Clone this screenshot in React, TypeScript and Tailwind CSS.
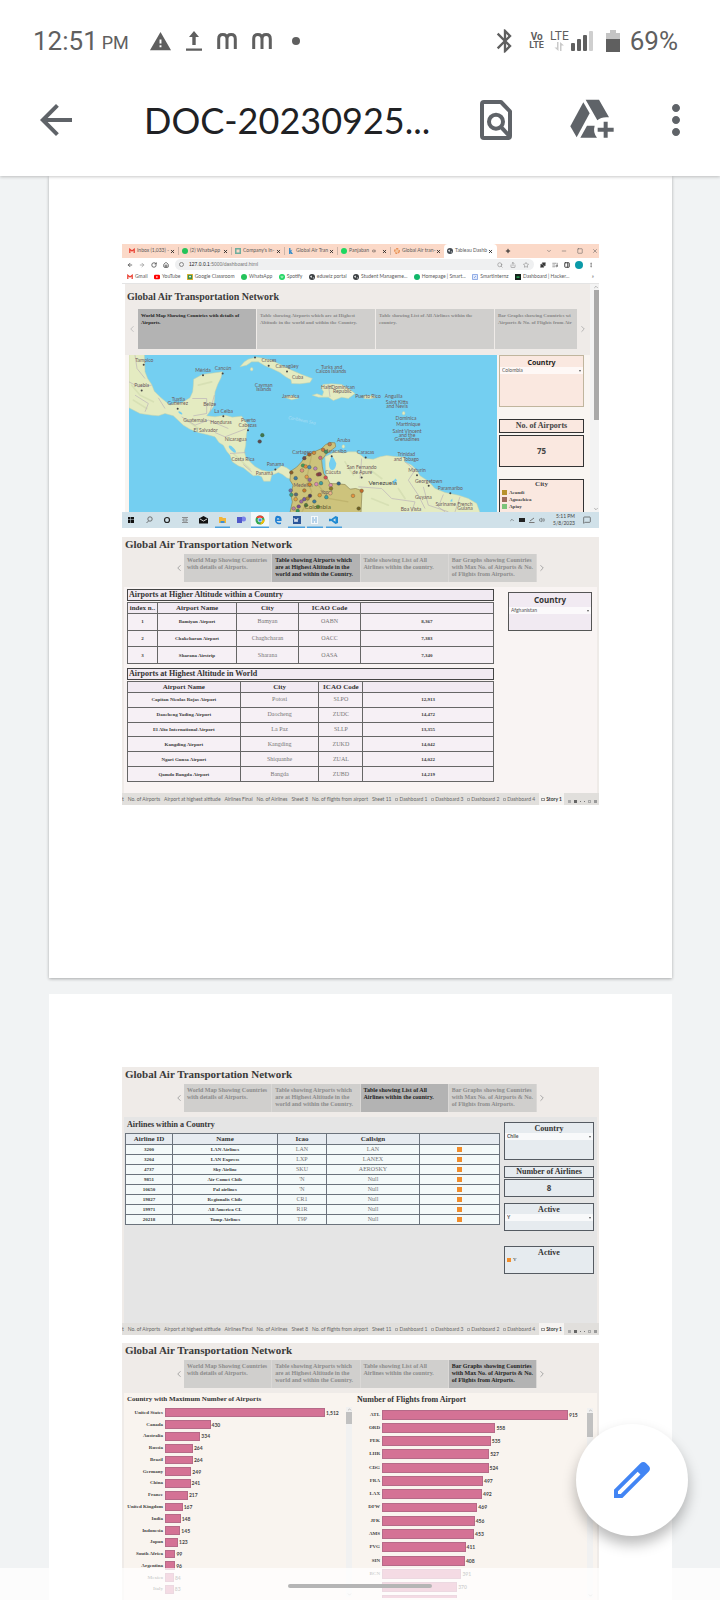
import type { ReactNode } from "react";
import { MdArrowBack, MdBluetooth, MdMoreVert, MdWarning } from "react-icons/md";
import {
  ArrowLeft,
  ArrowRight,
  ChevronDown,
  ChevronLeft,
  ChevronRight,
  ChevronUp,
  Home,
  ListMusic,
  MessageSquare,
  Minus,
  MoreVertical,
  PanelRight,
  Plus,
  Puzzle,
  RotateCw,
  Search,
  Share,
  Square,
  Star,
  Volume2,
  X,
} from "lucide-react";

const serif = "font-['Liberation_Serif',serif]";
const sans = "font-['Lato','Noto_Sans',sans-serif]";

/* ---------- Phone chrome ---------- */

function StatusBar() {
  return (
    <div className="flex h-[82px] items-center justify-between pl-[33px] pr-[42px] font-['Roboto',sans-serif] text-[#5f5f5f]">
      <div className="flex items-center">
        <span className="text-[26px] leading-8">12:51</span>
        <span className="ml-1 pt-1 text-[18px] leading-8">PM</span>
        <MdWarning className="ml-5 size-[23px]" />
        <svg viewBox="0 0 16 20" className="ml-[14px] h-5 w-4" fill="currentColor">
          <path d="M8 0 13 6H9.700V14H6.300V6H3zM0 17.500H16V19.800H0z" />
        </svg>
        {[0, 1].map((i) => (
          <svg key={i} viewBox="0 0 20 16" className="ml-[15px] h-4 w-5" fill="none" stroke="currentColor" strokeWidth="3">
            <path d="M1.700 16V6Q1.700 1.600 5.800 1.600 10 1.600 10 6V16M10 6Q10 1.600 14.200 1.600 18.300 1.600 18.300 6V16" />
          </svg>
        ))}
        <span className="ml-5 size-2 rounded-full bg-[#5f5f5f]" />
      </div>
      <div className="flex items-center">
        <MdBluetooth className="size-7" />
        <span className="ml-2.5 flex flex-col items-center text-[10px] font-bold leading-[9px]">
          <span>Vo</span>
          <span className="text-[9px]">LTE</span>
        </span>
        <span className="ml-1.5 flex flex-col items-center">
          <span className="text-[12px] leading-[11px]">LTE</span>
          <svg viewBox="0 0 10 9" className="h-[9px] w-[10px]" fill="#c9c9c9">
            <path d="M3 0H4.500V9L.5 5.500H3zM6 9H7.500V3.500H10L6 0z" />
          </svg>
        </span>
        <svg viewBox="0 0 22 20" className="ml-0.5 h-5 w-[22px]" fill="currentColor">
          <rect x="0" y="12" width="4" height="8" rx="1" />
          <rect x="6" y="8" width="4" height="12" rx="1" />
          <rect x="12" y="4" width="4" height="16" rx="1" />
          <rect x="18" y="0" width="4" height="20" rx="1" fill="#cfcfcf" />
        </svg>
        <svg viewBox="0 0 14 22" className="ml-[13px] h-[22px] w-[14px]">
          <path d="M4 0H10V3H14V9H0V3H4z" fill="#c4c4c4" />
          <path d="M0 9H14V22H0z" fill="#5f5f5f" />
        </svg>
        <span className="ml-2.5 text-[26px] leading-8">69%</span>
      </div>
    </div>
  );
}

function AppBar() {
  return (
    <div className="flex h-[94px] items-center pb-[18px] pl-8 pr-5 text-[#5f6368]">
      <button aria-label="Back" className="size-12">
        <MdArrowBack className="size-12" />
      </button>
      <h1 className="ml-16 flex-1 whitespace-nowrap font-['Lato',sans-serif] text-[36px] leading-[44px] text-[#202124]">
        DOC-20230925...
      </h1>
      <button aria-label="Find in page" className="size-12">
        <svg viewBox="6 228 144 144" className="size-12" fill="none" stroke="currentColor" strokeWidth="12">
          <path d="M42 246H93L120 274V348Q120 354 114 354H42Q36 354 36 348V252Q36 246 42 246z" strokeLinejoin="round" />
          <circle cx="78" cy="305" r="21" />
          <path d="M92 320 118 348" />
        </svg>
      </button>
      <button aria-label="Add to Drive" className="ml-12 size-12">
        <svg viewBox="295 229 144 144" className="size-12" fill="currentColor">
          <path d="M341 248 360 281 321 353 302 320z" />
          <path d="M348 240H388L418 293Q396 290 383 302z" />
          <path d="M352 318H375Q369 338 382 354H332z" />
          <path d="M402 306H414V324H432V336H414V354H402V336H384V324H402z" />
        </svg>
      </button>
      <button aria-label="More options" className="ml-9 size-12">
        <MdMoreVert className="size-12" />
      </button>
    </div>
  );
}

/* ---------- Story captions ---------- */

const captions = [
  "World Map Showing Countries with details of Airports.",
  "Table showing Airports which are at Highest Altitude in the world and within the Country.",
  "Table showing List of  All Airlines within the country.",
  "Bar Graphs showing Countries with Max No. of Airports & No. of Flights from Airports.",
];

const sheets = ["No. of Airports", "Airport at highest altitude", "Airlines Final", "No. of Airlines", "Sheet 8", "No. of flights from airport", "Sheet 11"];
const boards = ["Dashboard 1", "Dashboard 3", "Dashboard 2", "Dashboard 4"];

function Story({ active, body, tabs = true, children }: { active: number; body: string; tabs?: boolean; children: ReactNode }) {
  return (
    <section className="flex h-[268px] flex-col bg-[#efebe8]">
      <h2 className={`${serif} h-[17px] pl-[3px] pt-px text-[11px] font-bold leading-3 text-[#3a3a3a]`}>
        Global Air Transportation Network
      </h2>
      <div className="flex h-7 items-center">
        <button aria-label="Previous" className="flex w-[62px] justify-end text-[#999]">
          <ChevronLeft className="size-2.5" />
        </button>
        <div className="grid h-full flex-1 grid-cols-4">
          {captions.map((c, i) => (
            <button
              key={c}
              className={`${serif} flex items-start border-r border-[#dad8d6] pl-[3px] pt-[3px] text-left text-[6px] font-bold leading-[7px] ${
                i === active ? "bg-[#b3b3b3] text-[#222]" : "bg-[#d0cfcd] text-[#8b8b8b]"
              }`}
            >
              {c}
            </button>
          ))}
        </div>
        <button aria-label="Next" className="w-[62px] text-[#999]">
          <ChevronRight className="size-2.5" />
        </button>
      </div>
      <div className={`ml-0.5 mr-0.5 mt-[5px] min-h-0 flex-1 overflow-hidden ${body}`}>{children}</div>
      {tabs && (
        <div className={`${sans} flex h-3 items-stretch justify-between overflow-hidden whitespace-nowrap bg-[#e1dfdc] text-[5px] leading-3 text-[#666]`}>
          <span>t</span>
          {sheets.map((s) => (
            <button key={s}>{s}</button>
          ))}
          {boards.map((s) => (
            <button key={s} className="flex items-center gap-px">
              <i className="size-[3px] border border-[#aaa]" />
              {s}
            </button>
          ))}
          <button className="flex items-center gap-px bg-[#f5f3f1] px-0.5 font-bold text-[#333]">
            <i className="h-[3px] w-1 border border-[#999]" />
            Story 1
          </button>
          <span className="flex items-center gap-[3px] pr-0.5 pt-1">
            <i className="size-[3px] bg-[#aaa]" />
            <i className="size-[3px] bg-[#666]" />
            <i className="size-px bg-[#777]" />
            <i className="size-px bg-[#777]" />
            <i className="size-[3px] border border-[#aaa]" />
            <i className="size-[3px] bg-[#999]" />
          </span>
        </div>
      )}
    </section>
  );
}

function Drop({ label, value }: { label: string; value: string }) {
  return (
    <div className="flex h-[7px] items-center bg-white/70 pr-0.5">
      <select
        aria-label={label}
        className={`${sans} h-[7px] min-w-0 flex-1 appearance-none pl-0.5 text-[5px] leading-[7px] text-[#555]`}
      >
        <option>{value}</option>
      </select>
      <span className="border-x-[1px] border-t-[2px] border-x-transparent border-t-[#555]" />
    </div>
  );
}

/* ---------- Browser window with the map ---------- */

const browserTabs: [string, ReactNode][] = [
  ["Inbox (1,033) -", <path d="M.8 5V1.300L3 3 5.200 1.300V5" fill="none" stroke="#ea4335" strokeWidth="1.300" />],
  ["(2) WhatsApp", <circle cx="3" cy="3" r="3" fill="#25c35a" />],
  ["Company's In-", <path d="M0 0H6V6H0zM1.500 1.500V4.500H4.500V1.500z" fill="#6fae9e" fillRule="evenodd" />],
  ["Global Air Tran", <path d="M1 0H2.500V2.500L4.500 1.500 3.200 3.200 5 6H3L2.500 4.500V6H1z" fill="#3b8fc9" />],
  ["Panjaban", <circle cx="3" cy="3" r="3" fill="#1ed760" />],
  ["Global Air tran-", <circle cx="3" cy="3" r="2.300" fill="#f6c79f" stroke="#e8894d" strokeWidth="1.200" strokeDasharray="2 1" />],
  ["Tableau Dashb", <g><circle cx="3" cy="3" r="3" fill="#444b52" /><path d="M1 2.500 3 1.500 2.500 4zM3.800 3.500H5L4 5z" fill="#fff" /></g>],
];

const globe = <g><circle cx="3" cy="3" r="3" fill="#3c4043" /><path d="M1 2.500 3 1.500 2.500 4zM3.800 3.500H5L4 5z" fill="#fff" /></g>;

const bookmarks: [string, ReactNode][] = [
  ["Gmail", <path d="M.8 5V1.300L3 3 5.200 1.300V5" fill="none" stroke="#ea4335" strokeWidth="1.300" />],
  ["YouTube", <g><rect y=".8" width="6" height="4.400" rx="1.200" fill="#f00" /><path d="M2.300 2V4L4.200 3z" fill="#fff" /></g>],
  ["Google Classroom", <g><rect width="6" height="6" fill="#f2b632" /><rect x=".8" y=".8" width="4.400" height="4.400" fill="#3a8f4c" /><circle cx="3" cy="2.600" r=".9" fill="#fff" /></g>],
  ["WhatsApp", <circle cx="3" cy="3" r="3" fill="#25c35a" />],
  ["Spotify", <g><circle cx="3" cy="3" r="3" fill="#1ed760" /><path d="M1.500 2.300H4.500M1.800 3.700H4.200" stroke="#fff" strokeWidth=".6" /></g>],
  ["eduwiz portal", globe],
  ["Student Manageme...", globe],
  ["Homepage | Smart...", <circle cx="3" cy="3" r="3" fill="#12b76a" />],
  ["SmartInternz", <path d="M.5 .5H5.500V5.500H.5zM2 4 4 2" fill="#dfe8fb" stroke="#7c9ce0" strokeWidth=".8" />],
  ["Dashboard | Hacker...", <g><rect width="6" height="6" fill="#14221a" /><rect x="1.500" y="2.500" width="3" height="1.200" fill="#2ec866" /></g>],
];

function Favicon({ children, className = "" }: { children: ReactNode; className?: string }) {
  return (
    <svg viewBox="0 0 6 6" className={`size-[6px] shrink-0 ${className}`}>
      {children}
    </svg>
  );
}

function BrowserBars() {
  return (
    <div className={`${sans} text-[5px] text-[#5a5a5a]`}>
      <div className="flex h-[14px] items-stretch bg-[#fbd9c8] pl-1">
        {browserTabs.map(([name, icon], i) => (
          <button
            key={name}
            className={`flex w-[53px] items-center whitespace-nowrap pl-[3px] ${i === 6 ? "rounded-t bg-white" : ""}`}
          >
            <Favicon className="mr-0.5">{icon}</Favicon>
            <span className="flex-1 text-left">{name}</span>
            {i === 4 && <Volume2 className="mr-1.5 size-1 shrink-0 text-[#222]" />}
            <X className="size-[5px] shrink-0 text-[#222]" strokeWidth={4} />
            <span className={`ml-[3px] h-2 w-px ${i === 6 ? "" : "bg-[#cdb5a8]"}`} />
          </button>
        ))}
        <div className="flex flex-1 items-center justify-between pl-2 pr-px text-[#555]">
          <Plus className="size-[6px] text-[#222]" strokeWidth={4} />
          <span className="w-4" />
          <ChevronDown className="size-[6px]" />
          <Minus className="size-[6px]" />
          <Square className="size-[6px]" />
          <X className="size-[6px]" />
        </div>
      </div>
      <div className="flex h-[13px] items-center bg-white pl-[5px] pr-[5px] text-[#444]">
        <ArrowLeft className="mr-[6px] size-[6px]" strokeWidth={3} />
        <ArrowRight className="mr-[6px] size-[6px] text-[#999]" strokeWidth={3} />
        <RotateCw className="mr-[6px] size-[6px]" strokeWidth={3} />
        <Home className="mr-[6px] size-[6px]" strokeWidth={3} />
        <div className="flex h-[11px] flex-1 items-center gap-[5px] rounded-full bg-[#eff0f1] px-1">
          <span className="size-[5px] rounded-full border border-[#888]" />
          <span className="flex-1 font-['Liberation_Sans',sans-serif] text-[#777]">
            <span className="text-[#222]">127.0.0.1</span>:5000/dashboard.html
          </span>
          <Search className="mr-px size-[6px] text-[#777]" />
          <Share className="mx-px size-[6px] text-[#777]" />
          <Star className="mx-px size-[6px] text-[#777]" />
        </div>
        <Puzzle className="ml-[6px] size-[6px] fill-[#333]" />
        <ListMusic className="ml-[6px] size-[6px]" />
        <PanelRight className="ml-[6px] size-[6px]" strokeWidth={4} />
        <span className="ml-[5px] size-2 rounded-full bg-[#0b9aa8]" />
        <MoreVertical className="ml-[5px] size-[6px]" />
      </div>
      <div className="flex h-[13px] items-center justify-between border-b border-[#e4e4e4] bg-white pl-[5px] pr-[5px]">
        {bookmarks.map(([name, icon]) => (
          <a key={name} href="#" className="flex items-center gap-0.5 whitespace-nowrap">
            <Favicon>{icon}</Favicon>
            {name}
          </a>
        ))}
        <span className="pl-4">»</span>
      </div>
    </div>
  );
}

const places: [string, number, number][] = [
  ["Tampico", 88, 50], ["Puebla", 80, 127], ["Mérida", 264, 80], ["Cancún", 324, 76], ["Cruces", 462, 52],
  ["Camagüey", 516, 70], ["Cuba", 548, 101], ["Tuxtla", 190, 167], ["Gutiérrez", 188, 181], ["Belize", 284, 184],
  ["La Ceiba", 326, 204], ["Guatemala", 240, 231], ["Honduras", 318, 237], ["El Salvador", 272, 261],
  ["Puerto", 400, 230], ["Cabezas", 398, 245], ["Nicaragua", 362, 288], ["Costa Rica", 384, 347],
  ["Panama", 481, 363], ["Panamá", 448, 389], ["Cayman", 446, 125], ["Islands", 446, 138], ["Jamaica", 527, 160],
  ["Haiti", 634, 132], ["Dominican", 684, 132], ["Republic", 682, 145], ["Turks and", 650, 72], ["Caicos Islands", 648, 85],
  ["Aruba", 686, 292], ["Cartagena", 565, 328], ["Maracaibo", 660, 324], ["San Fernando", 740, 372], ["de Apure", 742, 387],
  ["Puerto Rico", 759, 158], ["Anguilla", 836, 158], ["Saint Kitts", 846, 176], ["and Nevis", 846, 189],
  ["Dominica", 873, 224], ["Martinique", 880, 243], ["Saint Vincent", 876, 263], ["and the", 876, 276],
  ["Grenadines", 876, 288], ["Caracas", 752, 328], ["Trinidad", 874, 333], ["and Tobago", 874, 347],
  ["Maturín", 906, 381], ["Georgetown", 941, 413], ["Paramaribo", 1006, 435], ["Guyana", 925, 461],
  ["Suriname", 992, 482], ["French", 1050, 482], ["Guiana", 1050, 495], ["Boa Vista", 888, 499],
  ["Medellín", 564, 426], ["Cúcuta", 654, 388], ["Yopal", 634, 446],
];

const towns: [number, number][] = [
  [86, 59], [80, 136], [264, 90], [323, 85], [420, 37], [461, 62], [516, 79], [188, 191], [325, 213], [399, 255],
  [481, 373], [650, 333], [752, 337], [740, 397], [906, 390], [941, 422], [1006, 444],
];

const dots: [number, number, string][] = [
  [442, 270, "#3d7a4c"], [434, 289, "#5b4a52"], [644, 297, "#c27b50"], [624, 314, "#c9713a"], [633, 320, "#3f8f63"],
  [597, 323, "#d08a3a"], [583, 328, "#9c5b2e"], [568, 339, "#6b4b49"], [616, 338, "#d0677a"], [564, 361, "#3f9f5b"],
  [572, 364, "#e08c3a"], [583, 366, "#4b8bb0"], [601, 370, "#b888b6"], [561, 376, "#df8f7a"], [529, 382, "#8a5c2b"],
  [609, 388, "#9e4242"], [614, 387, "#7f3b4b"], [632, 397, "#d54f55"], [542, 399, "#3e7ba0"], [575, 395, "#e69a4b"],
  [584, 404, "#8f6aa6"], [584, 418, "#d9822b"], [604, 417, "#d98cb2"], [618, 414, "#3f9ea0"], [647, 420, "#e08fae"],
  [671, 415, "#31648c"], [648, 430, "#8f7a26"], [527, 436, "#6a6db3"], [568, 436, "#c97b2d"], [529, 449, "#3c9f7a"],
  [543, 448, "#5a6b7a"], [646, 444, "#eab08a"], [614, 450, "#e09a3e"], [634, 456, "#3ca0a8"], [542, 462, "#dfa245"],
  [568, 462, "#7a5ba6"], [578, 460, "#b08a3a"], [585, 452, "#4a3a5a"], [598, 469, "#3b7a9a"], [559, 469, "#9a6b9e"],
  [551, 484, "#7b4d8e"], [536, 490, "#b5829f"], [548, 497, "#37965a"], [573, 480, "#4f7b3a"], [609, 485, "#5b9a3a"],
  [714, 452, "#e3923f"], [740, 437, "#c46b2b"], [731, 490, "#6f6120"],
];

const borders =
  "M60 30 66 70 90 100M42 110 70 125 110 120M60 150 100 175 90 200M130 158 150 190M200 215 240 240 280 225 340 250M232 160H275V205L235 212M298 150 285 200M300 262 330 275 395 250M345 325 392 322M385 358 410 380M640 118 645 155M740 340 735 400M730 425 800 430 830 460 900 470 890 500M870 350 900 375 880 405 910 450 930 490M925 425 940 480 1000 500M985 448 970 485 990 500M1035 455 1020 500";

const relief =
  "M50 120 75 150 115 170M55 165 95 190M210 222 250 250M355 325 405 372M250 120 290 110M760 370 800 400M770 460 820 480M850 430 870 460M690 350 715 390";

function MapView() {
  return (
    <svg viewBox="42 28 1104 474" preserveAspectRatio="xMinYMid slice" className="h-full w-full bg-[#74cff1]" role="img" aria-label="World map">
      <g fill="#e4ebc1" stroke="#c9d3a8" strokeWidth="1.500" strokeLinejoin="round">
        <path d="M42 28H88L90 80 98 100 110 118 118 138 138 158 165 180 180 172 198 174 225 158 233 140 235 120 236 102 262 88 290 84 322 80 318 98 308 118 300 140 298 165 295 185 284 200 275 212 300 215 330 210 352 216 380 213 400 240 394 268 392 300 388 320 392 335 405 350 420 364 440 375 462 380 480 376 500 362 515 368 525 375 530 402 515 398 503 388 490 382 470 390 466 408 446 408 440 395 430 390 415 392 400 380 385 368 370 362 352 350 345 330 335 318 325 300 312 292 300 275 275 268 250 262 225 252 205 240 190 226 175 212 150 205 130 212 110 210 75 205 42 188Z" />
        <path d="M375 65 388 50 400 42 425 36 448 40 470 46 500 60 530 75 560 88 592 100 585 112 555 116 530 115 528 104 512 95 495 82 470 70 450 62 430 50 410 50 395 60Z" />
        <path d="M592 150 606 146 622 152 626 140 618 128 624 118 650 116 680 118 700 130 720 145 700 160 680 156 655 166 640 156 610 156Z" />
        <path d="M508 156 530 151 550 159 530 164Z" />
        <path d="M745 152 775 152 782 157 765 161 747 160Z" />
        <ellipse cx="410" cy="72" rx="4" ry="5" />
        <ellipse cx="866" cy="204" rx="4" ry="5" />
        <ellipse cx="685" cy="304" rx="4" ry="5" />
        <path d="M630 335 665 318 685 324 700 320 722 320 735 328 750 340 775 342 795 335 815 331 845 335 870 336 868 350 890 360 905 375 915 392 940 408 960 430 990 442 1030 450 1060 460 1085 475 1095 502H640Z" />
      </g>
      <path d={relief} fill="none" stroke="#cfd8ac" strokeWidth="5" strokeLinecap="round" opacity=".6" />
      <path d={borders} fill="none" stroke="#b9b1b8" strokeWidth="2" strokeLinejoin="round" />
      <path
        d="M527 378 545 366 560 350 570 335 585 326 600 319 620 310 632 298 648 292 660 293 662 305 645 318 635 325 620 345 622 365 626 385 640 405 645 415 668 416 690 418 705 432 722 430 741 436 738 502H525L532 470 528 450 534 420 525 405Z"
        fill="#cdc37c"
        stroke="#8d8450"
        strokeWidth="2"
        strokeLinejoin="round"
      />
      <path d="M590 330 575 400 590 440 560 502M610 420 640 460 700 470" stroke="#b9ae68" strokeWidth="4" fill="none" opacity=".7" />
      <path d="M650 330Q658 340 664 355 662 374 652 375 641 372 642 354 646 342 650 330z" fill="#74cff1" />
      <ellipse cx="352" cy="312" rx="14" ry="5" transform="rotate(45 352 312)" fill="#74cff1" />
      <ellipse cx="196" cy="203" rx="7" ry="3" transform="rotate(35 196 203)" fill="#74cff1" />
      <path d="M832 410 842 400 846 406 838 418zM1005 468 1012 460V470z" fill="#74cff1" />
      <text x="560" y="230" fontSize="14" fontStyle="italic" textAnchor="middle" fill="#a9def4" transform="rotate(12 560 230)" className={sans}>
        Caribbean Sea
      </text>
      {towns.map(([x, y]) => (
        <circle key={`${x}-${y}`} cx={x} cy={y} r="3" fill="#444" />
      ))}
      <g fontSize="15" textAnchor="middle" fill="#6c5a5a" className={sans}>
        {places.map(([name, x, y]) => (
          <text key={name} x={x} y={y}>
            {name}
          </text>
        ))}
      </g>
      {dots.map(([x, y, c]) => (
        <circle key={`${x}-${y}`} cx={x} cy={y} r="5.500" fill={c} stroke="#4a4a3a" strokeWidth="1" />
      ))}
      <g textAnchor="middle" fill="#444" fontSize="19" className={sans}>
        <text x="608" y="492" fill="#5c5630">Colombia</text>
        <text x="803" y="419">Venezuela</text>
      </g>
    </svg>
  );
}

function TaskBar() {
  return (
    <div className={`${sans} flex h-4 items-stretch bg-[#d0e1e9] text-[5px] text-[#444]`}>
      <svg viewBox="0 0 222 16" className="h-4 w-[222px]">
        <path d="M6 5H8.500V7.500H6zM9 5H12V7.500H9zM6 8H8.500V11H6zM9 8H12V11H9z" fill="#111" />
        <circle cx="28" cy="7" r="2.200" fill="none" stroke="#555" strokeWidth=".8" />
        <path d="M26.500 9 24.500 11" stroke="#555" strokeWidth=".8" />
        <circle cx="45" cy="8" r="2.500" fill="none" stroke="#222" strokeWidth="1.200" />
        <path d="M60 5.500H66M60 10.500H66M61 7H65V9H61z" fill="none" stroke="#777" strokeWidth=".8" />
        <path d="M77 6.500 81.500 4 86 6.500V11.500H77z" fill="#111" />
        <path d="M78 7 81.500 9 85 7" stroke="#fff" strokeWidth=".8" fill="none" />
        <path d="M97 5H100L101 6H104V11H97z" fill="#f2b63a" />
        <path d="M98.500 9H102.500V11H98.500z" fill="#3b8fd6" />
        <path d="M93 14.500H108V16H93z" fill="#4aa0dc" />
        <circle cx="121.500" cy="7" r="2.500" fill="#7b83eb" />
        <rect x="115" y="5" width="5" height="6" fill="#5059c9" />
        <rect x="129" width="18" height="16" fill="#f2f7f9" />
        <circle cx="138" cy="8" r="4.500" fill="#31a853" />
        <path d="M134 6A4.500 4.500 0 0 1 142 6H138z" fill="#e94335" />
        <path d="M142.500 7A4.500 4.500 0 0 1 138 12.500L140 9z" fill="#fbbc05" />
        <circle cx="138" cy="8" r="2" fill="#4285f4" stroke="#fff" strokeWidth=".7" />
        <path d="M129 14.500H147V16H129z" fill="#4aa0dc" />
        <path d="M159.500 9H154.500Q155 11.500 159 10.500V12Q153 13 153 8T156.500 4Q160 4 159.500 9M154.800 7.500H157.500Q157 6 156 6T154.800 7.500" fill="#1f7fd4" />
        <rect x="171" y="4" width="8" height="8" fill="#2b579a" />
        <path d="M172 6 173 10 174 7 175 10 176 6" stroke="#fff" strokeWidth=".8" fill="none" />
        <path d="M166 14.500H183V16H166z" fill="#4aa0dc" />
        <rect x="189" y="4" width="7" height="8" fill="#f4f8fb" />
        <path d="M190 6H192M193 6H195M190 8H195M190 10H192M193 10H195" stroke="#5b9bd0" strokeWidth=".8" />
        <path d="M185 14.500H201V16H185z" fill="#4aa0dc" />
        <path d="M213.500 4 216 5V11L213.500 12 209 8.800 208 9.600 207 9V7L208 6.400 209 7.200zM213.500 6.200 211 8 213.500 9.800z" fill="#1f8ad2" fillRule="evenodd" />
        <path d="M204 14.500H220V16H204z" fill="#4aa0dc" />
      </svg>
      <div className="flex flex-1 items-center justify-end gap-1 pr-2">
        <ChevronUp className="size-[6px]" />
        <span className="h-1 w-[6px] bg-[#222]" />
        <svg viewBox="0 0 6 6" className="size-[6px]" fill="none" stroke="#777">
          <path d="M0 5.500H5.500M1 4 5 1" />
        </svg>
        <Volume2 className="size-[6px]" />
        <span className="px-1 text-right leading-[7px]">
          5:11 PM
          <br />
          5/8/2023
        </span>
        <MessageSquare className="size-2" />
      </div>
    </div>
  );
}

function MapShot() {
  const legend: [string, string][] = [
    ["Acandi", "bg-[#b8922c]"],
    ["Aguachica", "bg-[#9d6b5c]"],
    ["Apiay", "bg-[#7cc47a]"],
  ];
  const caption = "flex items-start bg-[#d0cfcd] pl-[3px] pr-1.5 pt-[3px] text-left";
  return (
    <section className="flex h-[284px] flex-col">
      <BrowserBars />
      <div className="flex min-h-0 flex-1 pl-[3px]">
        <div className="flex flex-1 flex-col overflow-hidden bg-[#efebe8] pt-[3px]">
          <h2 className={`${serif} h-[22px] pl-0.5 pt-1 text-[10px] font-bold leading-3 text-[#3a3a3a]`}>Global Air Transportation Network</h2>
          <div className="flex h-10 items-center">
            <button aria-label="Previous" className="w-[13px] pl-0.5 text-[#bbb]">
              <ChevronLeft className="size-2.5" />
            </button>
            <div className={`${serif} grid h-full flex-1 grid-cols-[118px_118px_118px_1fr] gap-px text-[5px] font-bold leading-[7px] text-[#888]`}>
              <button className="flex items-start bg-[#b3b3b3] pl-[3px] pr-1.5 pt-[3px] text-left text-[#222]">{captions[0]}</button>
              <button className={caption}>{captions[1]}</button>
              <button className={caption}>{captions[2]}</button>
              <button className="flex items-start whitespace-nowrap bg-[#d0cfcd] pl-[3px] pt-[3px] text-left">
                Bar Graphs showing Countries wi
                <br />
                Airports &amp; No. of Flights from Air
              </button>
            </div>
            <button aria-label="Next" className="w-[13px] pl-px text-[#aaa]">
              <ChevronRight className="size-2.5" />
            </button>
          </div>
          <div className="mt-1.5 flex min-h-0 flex-1 bg-[#f9f5f1] pl-1 pr-[6px]">
            <div className="min-w-0 flex-1">
              <MapView />
            </div>
            <div className="ml-0.5 flex w-[85px] flex-col overflow-hidden text-center">
              <div className="h-[52px] shrink-0 border border-[#c0b59d] bg-[#fae8e0] pt-0.5">
                <div className="font-['Noto_Sans',sans-serif] text-[7px] font-bold leading-[9px] text-[#222]">Country</div>
                <Drop label="Country" value="Colombia" />
              </div>
              <div className={`${serif} mt-3 h-[14px] shrink-0 border border-[#333] bg-[#fae8e0] text-[8px] font-bold leading-3 text-[#444]`}>No. of Airports</div>
              <div className="mt-0.5 h-8 shrink-0 border border-[#333] bg-[#fae8e0] font-['Noto_Sans',sans-serif] text-[8px] font-bold leading-[30px] text-[#444]">75</div>
              <div className={`${serif} mt-3 h-[60px] shrink-0 border border-[#333] bg-[#fae8e0] text-[5px] font-bold text-[#444]`}>
                <div className="text-[7px] leading-[9px]">City</div>
                {legend.map(([n, c]) => (
                  <div key={n} className="flex h-[7px] items-center gap-0.5 pl-0.5">
                    <i className={`size-[5px] ${c}`} />
                    {n}
                  </div>
                ))}
              </div>
            </div>
          </div>
        </div>
        <div className="flex w-[9px] flex-col items-center bg-[#f3f3f3] pl-[3px] text-[#777]">
          <ChevronUp className="size-[6px]" />
          <span className="h-[130px] w-[5px] bg-[#a9a9a9]" />
          <ChevronDown className="mt-auto size-[6px]" />
        </div>
      </div>
      <TaskBar />
    </section>
  );
}

/* ---------- Altitude tables ---------- */

const local = [
  ["1", "Bamiyan Airport", "Bamyan", "OABN", "8,367"],
  ["2", "Chakcharan Airport", "Chaghcharan", "OACC", "7,383"],
  ["3", "Sharana Airstrip", "Sharana", "OASA", "7,340"],
];
const world = [
  ["Capitan Nicolas Rojas Airport", "Potosi", "SLPO", "12,913"],
  ["Daocheng Yading Airport", "Daocheng", "ZUDC", "14,472"],
  ["El Alto International Airport", "La Paz", "SLLP", "13,355"],
  ["Kangding Airport", "Kangding", "ZUKD", "14,042"],
  ["Ngari Gunsa Airport", "Shiquanhe", "ZUAL", "14,022"],
  ["Qamdo Bangda Airport", "Bangda", "ZUBD", "14,219"],
];

function Grid({ cols, head, rows, height, fill, line, headFill, dim }: {
  cols: number[]; head: string[]; rows: ReactNode[][]; height: string; fill: string; line: string; headFill: string; dim: number[];
}) {
  const total = cols.reduce((a, b) => a + b, 0);
  return (
    <table className={`${serif} w-full table-fixed border-collapse text-center ${height} ${fill}`}>
      <colgroup>
        {cols.map((c, i) => (
          <col key={i} style={{ width: `${(c / total) * 100}%` }} />
        ))}
      </colgroup>
      <thead>
        <tr className={`h-[11px] ${headFill}`}>
          {head.map((h, i) => (
            <th key={i} className={`whitespace-nowrap border p-0 text-[7px] leading-[9px] text-[#333] ${line}`}>
              {h}
            </th>
          ))}
        </tr>
      </thead>
      <tbody>
        {rows.map((r, j) => (
          <tr key={j}>
            {r.map((v, i) => (
              <td key={i} className={`border p-0 leading-[7px] ${line} ${dim.includes(i) ? "text-[6px] text-[#777]" : "text-[5px] font-bold text-[#3a3a3a]"}`}>
                {v}
              </td>
            ))}
          </tr>
        ))}
      </tbody>
    </table>
  );
}

function AltitudeShot() {
  const heading = `${serif} h-3 border border-[#444] bg-[#f1eaf2] pl-px text-[8px] font-bold leading-[10px] text-[#333]`;
  return (
    <Story active={1} body="bg-[#f9f4f3]">
      <div className="flex items-start pl-[3px] pr-[5px] pt-0.5">
        <div className="min-w-0 flex-1">
          <h3 className={heading}>Airports at Higher Altitude within a Country</h3>
          <Grid cols={[30, 79, 62, 62, 133]} head={["index n..", "Airport Name", "City", "ICAO Code", ""]} rows={local} height="mt-px h-[62px]" fill="bg-[#f6f0f5]" line="border-[#666]" headFill="bg-[#f1eaf2]" dim={[2, 3]} />
          <h3 className={`${heading} mt-1`}>Airports at Highest Altitude in World</h3>
          <Grid cols={[113, 79, 44, 131]} head={["Airport Name", "City", "ICAO Code", ""]} rows={world} height="mt-px h-[101px]" fill="bg-[#f6f0f5]" line="border-[#666]" headFill="bg-[#f1eaf2]" dim={[1, 2]} />
        </div>
        <div className="ml-[14px] mt-[3px] h-[39px] w-[84px] border border-[#555] bg-[#f1eaf2] pt-0.5 text-center">
          <div className="mb-0.5 font-['Noto_Sans',sans-serif] text-[8px] font-bold leading-[10px] text-[#333]">Country</div>
          <Drop label="Country" value="Afghanistan" />
        </div>
      </div>
    </Story>
  );
}

/* ---------- Airlines table ---------- */

const airlines = [
  ["3200", "LAN Airlines", "LAN", "LAN"],
  ["3204", "LAN Express", "LXP", "LANEX"],
  ["4737", "Sky Airline", "SKU", "AEROSKY"],
  ["9851", "Air Comet Chile", "'N", "Null"],
  ["10650", "Pal airlines", "'N", "Null"],
  ["19827", "Regionalis Chile", "CR1", "Null"],
  ["19971", "All America CL", "R1R", "Null"],
  ["20218", "Tomp Airlines", "T9P", "Null"],
];

function AirlinesShot() {
  const box = `${serif} border border-[#555b62] bg-[#e6ebef] text-center font-bold leading-[9px] text-[#333]`;
  const rows = airlines.map((r) => [...r, <span className="mx-auto block size-[5px] bg-[#f28e2b]" />]);
  return (
    <Story active={2} body="bg-[#e5e5e5]">
      <div className="flex items-start pl-px pr-[3px]">
        <div className="min-w-0 flex-1 pt-0.5">
          <h3 className={`${serif} h-[14px] pl-0.5 text-[8px] font-bold leading-3 text-[#333]`}>Airlines within a Country</h3>
          <Grid cols={[47, 105, 49, 93, 80]} head={["Airline ID", "Name", "Icao", "Callsign", ""]} rows={rows} height="h-[92px]" fill="bg-[#f3f9f9]" line="border-[#6b737c]" headFill="bg-[#e6ebf0]" dim={[2, 3]} />
        </div>
        <div className="ml-1 flex w-[90px] flex-col pt-[5px] text-[8px]">
          <div className={`${box} h-[38px] pt-px`}>
            Country
            <Drop label="Country" value="Chile" />
          </div>
          <div className={`${box} mt-[6px] h-3`}>Number of Airlines</div>
          <div className="mt-px h-[18px] border border-[#555b62] bg-[#e6ebef] text-center font-['Noto_Sans',sans-serif] font-bold leading-4 text-[#444]">8</div>
          <div className={`${box} mt-[6px] h-[28px] pt-px`}>
            Active
            <Drop label="Active" value="Y" />
          </div>
          <div className={`${box} mt-[15px] h-[28px] pt-px`}>
            Active
            <div className="flex items-center gap-0.5 pl-0.5 text-[5px] font-normal leading-[6px]">
              <i className="size-1 bg-[#f28e2b]" />Y
            </div>
          </div>
        </div>
      </div>
    </Story>
  );
}

/* ---------- Bar charts ---------- */

const countries: [string, string][] = [
  ["United States", "1,512"], ["Canada", "430"], ["Australia", "334"], ["Russia", "264"], ["Brazil", "264"],
  ["Germany", "249"], ["China", "241"], ["France", "217"], ["United Kingdom", "167"], ["India", "148"],
  ["Indonesia", "145"], ["Japan", "123"], ["South Africa", "99"], ["Argentina", "96"], ["Mexico", "84"],
  ["Italy", "83"], ["Iran", "82"],
];
const flights: [string, string][] = [
  ["ATL", "915"], ["ORD", "558"], ["PEK", "535"], ["LHR", "527"], ["CDG", "524"], ["FRA", "497"], ["LAX", "492"],
  ["DFW", "469"], ["JFK", "456"], ["AMS", "453"], ["PVG", "411"], ["SIN", "408"], ["BCN", "391"], ["ICN", "370"], ["MUC", "369"],
];

function Bars({ data, max, label, plot, thumb, height }: { data: [string, string][]; max: number; label: string; plot: string; thumb: string; height: string }) {
  return (
    <div className="flex h-[190px] overflow-hidden">
      <div className={`flex flex-1 flex-col ${height}`}>
        {data.map(([name, value]) => (
          <div key={name} className="flex min-h-0 flex-1 items-center">
            <span className={`${serif} ${label} shrink-0 pr-0.5 text-right text-[5px] font-bold leading-[6px] text-[#444]`}>{name}</span>
            <div className={`flex h-3/4 items-center ${plot}`}>
              <span className="h-full shrink-0 border border-[#b56a88] bg-[#d47295]" style={{ width: `${(Number(value.replace(",", "")) / max) * 100}%` }} />
              <span className={`${sans} pl-px text-[5px] font-bold leading-[6px] text-[#444]`}>{value}</span>
            </div>
          </div>
        ))}
      </div>
      <div className="flex w-[6px] flex-col items-center bg-[#f1f1f1] text-[#777]">
        <ChevronUp className="size-[5px]" />
        <span className={`w-[6px] bg-[#c1c1c1] ${thumb}`} />
        <ChevronDown className="mt-auto size-[5px]" />
      </div>
    </div>
  );
}

function ChartsShot() {
  return (
    <Story active={3} body="bg-[#f9f4ef]" tabs={false}>
      <div className="grid grid-cols-[228px_1fr] gap-x-0.5">
        <div>
          <h3 className={`${serif} h-[14px] pl-[3px] pt-px text-[7px] font-bold leading-[10px] text-[#333]`}>Country with Maximum Number of Airports</h3>
          <Bars data={countries} max={1512} label="w-[41px]" plot="w-[160px]" thumb="h-3" height="h-[200px]" />
        </div>
        <div className="pr-1">
          <h3 className={`${serif} h-[15px] pl-[3px] pt-0.5 text-[8px] font-bold leading-[10px] text-[#333]`}>Number of Flights from Airport</h3>
          <Bars data={flights} max={915} label="w-[28px]" plot="w-[186px]" thumb="h-6" height="h-[199px]" />
        </div>
      </div>
    </Story>
  );
}

/* ---------- Screen ---------- */

export default function App() {
  return (
    <div className="relative flex h-screen flex-col overflow-hidden bg-[#f1f3f4]">
      <header className="relative z-10 shrink-0 bg-white shadow-[0_1px_3px_rgba(0,0,0,0.22)]">
        <StatusBar />
        <AppBar />
      </header>
      <main className="min-h-0 flex-1 overflow-hidden pl-[49px] pr-12">
        <article className="flex flex-col gap-[9px] bg-white px-[73px] pb-[173px] pt-[68px] shadow-[0_1px_3px_rgba(0,0,0,0.3)]">
          <MapShot />
          <AltitudeShot />
        </article>
        <article className="mt-4 flex flex-col gap-2 bg-white px-[73px] pb-[68px] pt-[73px]">
          <AirlinesShot />
          <ChartsShot />
        </article>
      </main>
      <div className="absolute inset-x-0 bottom-0 flex h-8 items-center justify-center bg-white/75 pt-1">
        <span className="h-1 w-36 rounded-full bg-[#b5b5b5]" />
      </div>
      <button
        aria-label="Edit"
        className="absolute bottom-16 right-8 flex size-28 items-center justify-center rounded-full bg-white shadow-[0_8px_14px_rgba(0,0,0,0.28)]"
      >
        <svg viewBox="0 0 24 24" className="size-12" fill="#4285f4">
          <path d="M20.410 4.940l-1.350-1.350c-.78-.78-2.050-.78-2.830 0L3 16.820V21h4.180L20.410 7.770c.79-.78.79-2.050 0-2.830zm-14 14.120L5 19v-1.360l9.820-9.820 1.410 1.410-9.820 9.830z" />
        </svg>
      </button>
    </div>
  );
}
